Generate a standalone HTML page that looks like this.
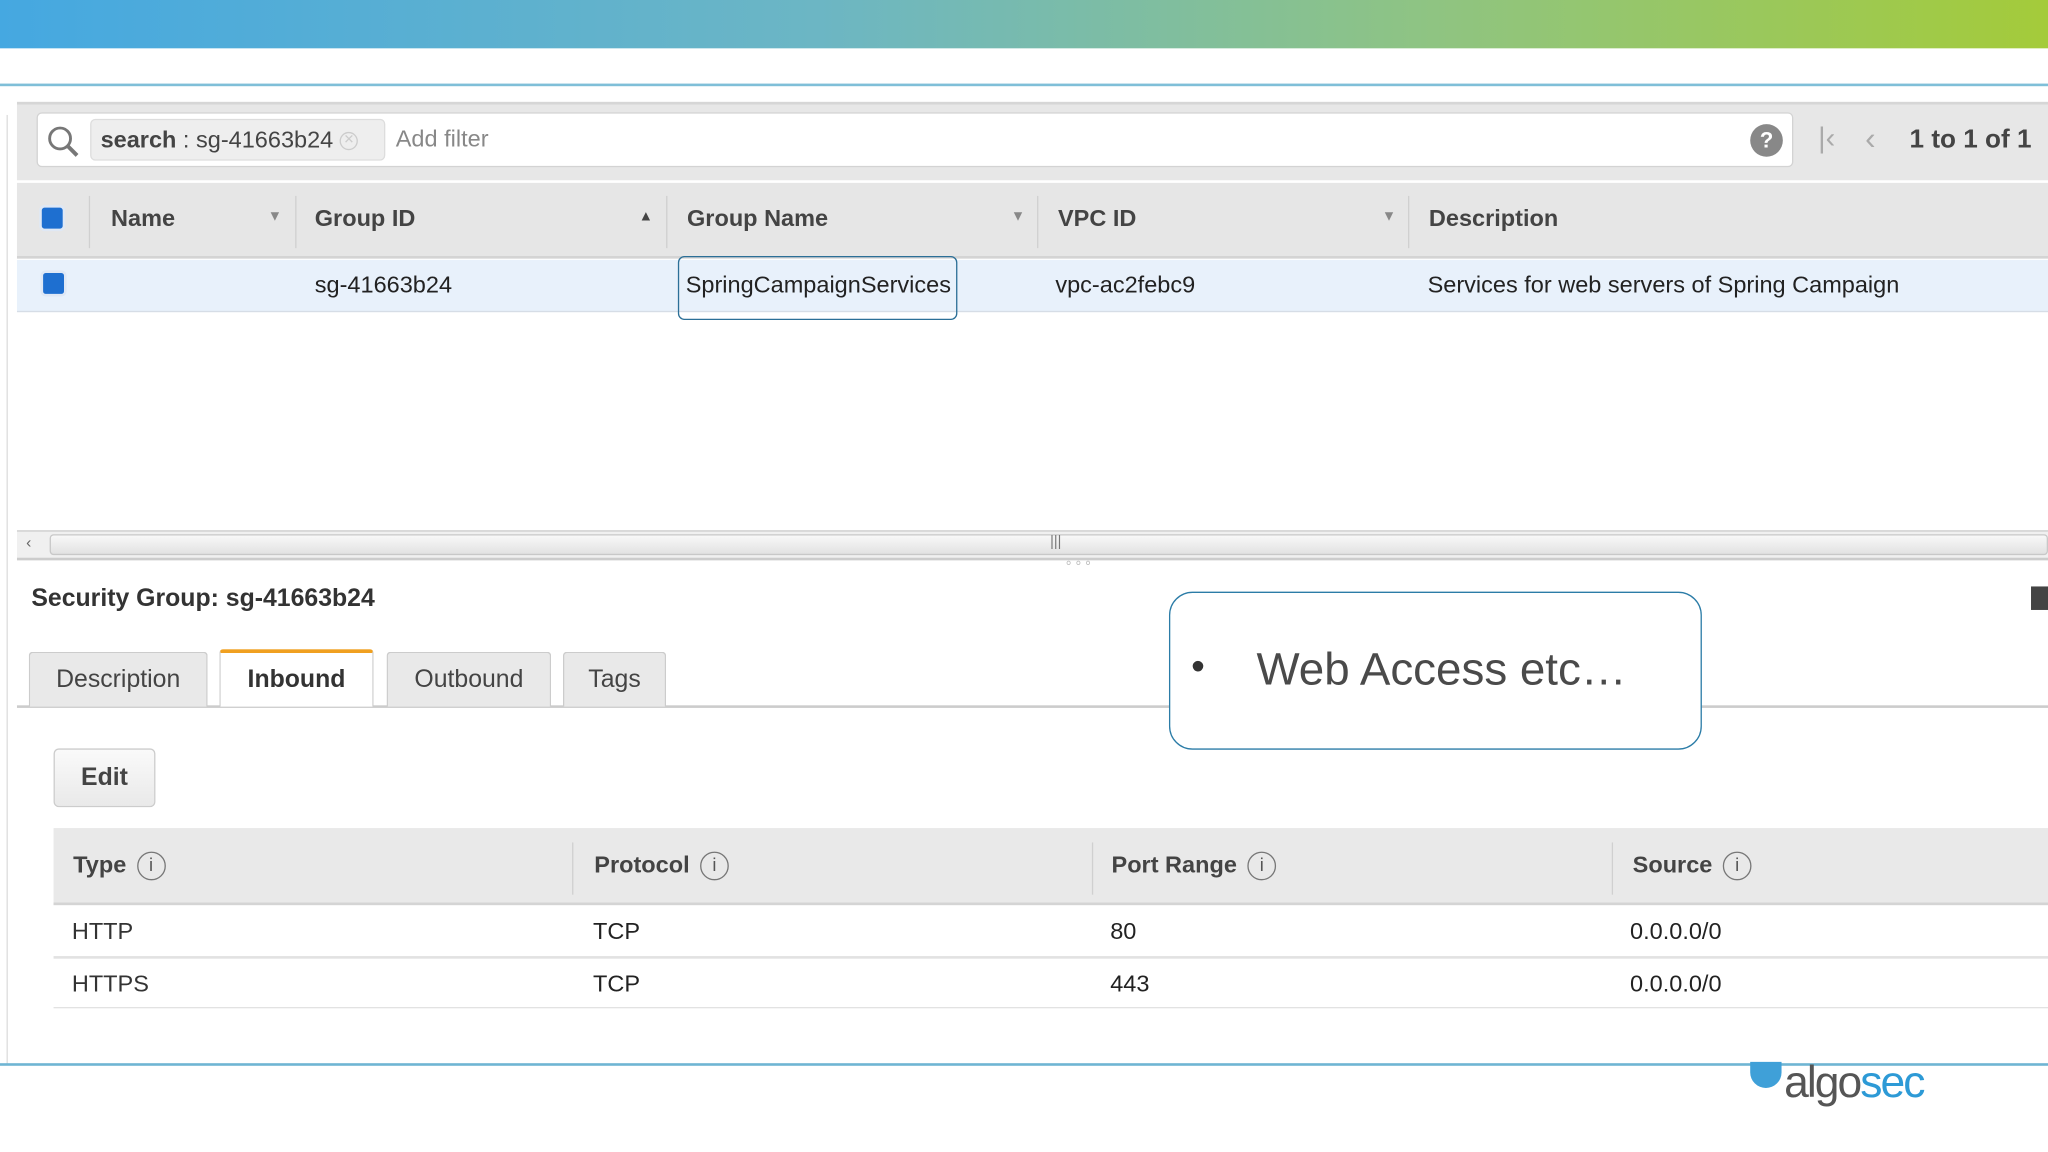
<!DOCTYPE html>
<html><head><meta charset="utf-8"><style>
*{box-sizing:border-box;margin:0;padding:0}
body{width:2048px;height:1152px;overflow:hidden;background:#fff;font-family:"Liberation Sans",Arial,sans-serif;color:#333}
#w{position:absolute;left:0;top:0;width:1568px;height:882px;transform:scale(1.30612);transform-origin:0 0}
.a{position:absolute}
.hd{font-weight:bold;font-size:18px;color:#444}
.tx{font-size:18px;color:#222}
.sep{position:absolute;width:1px;background:#d0d0d0}
.cb{position:absolute;width:20px;height:20px;border-radius:4px;background:#1e6fd0;border:2px solid #dfe8f5}
.tab{position:absolute;top:499px;height:42px;border:1px solid #ccc;border-bottom:none;background:#e9e9e9;font-size:19px;color:#444;text-align:center;line-height:42px;border-radius:3px 3px 0 0}
.ic{display:inline-block;width:22px;height:22px;border:1.5px solid #777;border-radius:50%;font-size:14px;line-height:19px;text-align:center;font-weight:normal;color:#555;margin-left:8px;vertical-align:middle}
</style></head><body><div id="w">
<div class="a" style="left:0;top:0;width:1568px;height:37px;background:linear-gradient(90deg,#45a8e1,#6cb6c4 40%,#8fc482 70%,#a4cb3a)"></div>
<div class="a" style="left:0;top:64px;width:1568px;height:2px;background:#7fbfd8"></div>
<div class="a" style="left:5px;top:88px;width:1px;height:727px;background:#ddd"></div>
<div class="a" style="left:13px;top:78px;width:1555px;height:60px;background:#e7e7e7;border-top:2px solid #d6d6d6"></div>
<div class="a" style="left:28px;top:86px;width:1345px;height:42px;background:#fff;border:1px solid #d3d3d3;border-radius:4px"></div>
<svg class="a" style="left:34px;top:94px" width="28" height="28"><circle cx="12" cy="12" r="8" fill="none" stroke="#777" stroke-width="2.2"/><line x1="18" y1="18" x2="25" y2="25" stroke="#777" stroke-width="3"/></svg>
<div class="a" style="left:69px;top:91px;width:226px;height:32px;background:#eee;border:1px solid #ddd;border-radius:4px;font-size:18px;line-height:30px;padding-left:7px;color:#444"><b>search</b> : sg-41663b24 <span style="display:inline-block;width:14px;height:14px;border-radius:50%;border:1px solid #ccc;font-size:10px;line-height:12px;text-align:center;color:#ccc;vertical-align:middle">✕</span></div>
<div class="a" style="left:303px;top:96px;font-size:18px;color:#888">Add filter</div>
<div class="a" style="left:1340px;top:95px;width:25px;height:25px;border-radius:50%;background:#888;color:#fff;font-weight:bold;text-align:center;line-height:25px;font-size:17px">?</div>
<div class="a" style="left:1392px;top:93px;font-size:22px;color:#aaa">|&lsaquo;</div>
<div class="a" style="left:1428px;top:93px;font-size:24px;color:#aaa">&lsaquo;</div>
<div class="a" style="left:1462px;top:96px;font-size:20px;font-weight:bold;color:#444">1 to 1 of 1</div>
<div class="a" style="left:13px;top:140px;width:1555px;height:58px;background:#e6e6e6;border-bottom:2px solid #d4d4d4"></div>
<div class="cb" style="left:30px;top:157px"></div>
<div class="sep" style="left:68px;top:150px;height:40px"></div>
<div class="sep" style="left:226px;top:150px;height:40px"></div>
<div class="sep" style="left:510px;top:150px;height:40px"></div>
<div class="sep" style="left:794px;top:150px;height:40px"></div>
<div class="sep" style="left:1078px;top:150px;height:40px"></div>
<div class="a hd" style="left:85px;top:157px">Name</div><div class="a" style="left:205px;top:160px;font-size:11px;color:#888">▼</div>
<div class="a hd" style="left:241px;top:157px">Group ID</div><div class="a" style="left:489px;top:160px;font-size:11px;color:#444">▲</div>
<div class="a hd" style="left:526px;top:157px">Group Name</div><div class="a" style="left:774px;top:160px;font-size:11px;color:#888">▼</div>
<div class="a hd" style="left:810px;top:157px">VPC ID</div><div class="a" style="left:1058px;top:160px;font-size:11px;color:#888">▼</div>
<div class="a hd" style="left:1094px;top:157px">Description</div>
<div class="a" style="left:13px;top:199px;width:1555px;height:40px;background:#e8f1fb;border-bottom:1px solid #d6dde6"></div>
<div class="cb" style="left:31px;top:207px"></div>
<div class="a tx" style="left:241px;top:208px">sg-41663b24</div>
<div class="a" style="left:519px;top:196px;width:214px;height:49px;border:1.5px solid #2b6f97;border-radius:5px"></div>
<div class="a tx" style="left:525px;top:208px">SpringCampaignServices</div>
<div class="a tx" style="left:808px;top:208px">vpc-ac2febc9</div>
<div class="a tx" style="left:1093px;top:208px">Services for web servers of Spring Campaign</div>
<div class="a" style="left:13px;top:406px;width:1555px;height:23px;background:#f0f0f0;border-top:1px solid #ccc;border-bottom:2px solid #ccc"></div>
<div class="a" style="left:38px;top:409px;width:1530px;height:16px;background:linear-gradient(#f8f8f8,#e2e2e2);border:1px solid #c8c8c8;border-radius:3px"></div>
<div class="a" style="left:20px;top:408px;font-size:12px;color:#666">&lsaquo;</div>
<div class="a" style="left:804px;top:409px;font-size:11px;color:#777">|||</div>
<div class="a" style="left:816px;top:428px;font-size:11px;color:#bbb;letter-spacing:3px">°°°</div>
<div class="a" style="left:24px;top:448px;font-size:19px;font-weight:bold;color:#333">Security Group: sg-41663b24</div>
<div class="a" style="left:1555px;top:449px;width:13px;height:18px;background:#444"></div>
<div class="a" style="left:13px;top:540px;width:1555px;height:2px;background:#ccc"></div>
<div class="tab" style="left:22px;width:137px">Description</div>
<div class="tab" style="left:168px;width:118px;background:#fff;border-top:3px solid #f0a020;font-weight:bold;color:#333;height:44px;top:497px">Inbound</div>
<div class="tab" style="left:296px;width:126px">Outbound</div>
<div class="tab" style="left:431px;width:79px">Tags</div>
<div class="a" style="left:895px;top:453px;width:408px;height:121px;border:1.5px solid #2b7ca7;border-radius:18px;background:#fff"></div>
<div class="a" style="left:912px;top:494px;font-size:30px;color:#333">•</div>
<div class="a" style="left:962px;top:493px;font-size:35px;color:#4a4a4a">Web Access etc…</div>
<div class="a" style="left:41px;top:573px;width:78px;height:45px;border:1px solid #ccc;border-radius:4px;background:linear-gradient(#fafafa,#e9e9e9);text-align:center;line-height:44px;font-size:19px;font-weight:bold;color:#444">Edit</div>
<div class="a" style="left:41px;top:634px;width:1527px;height:59px;background:#e9e9e9;border-bottom:2px solid #d4d4d4"></div>
<div class="sep" style="left:438px;top:645px;height:40px"></div>
<div class="sep" style="left:836px;top:645px;height:40px"></div>
<div class="sep" style="left:1234px;top:645px;height:40px"></div>
<div class="a hd" style="left:56px;top:652px">Type<span class="ic">i</span></div>
<div class="a hd" style="left:455px;top:652px">Protocol<span class="ic">i</span></div>
<div class="a hd" style="left:851px;top:652px">Port Range<span class="ic">i</span></div>
<div class="a hd" style="left:1250px;top:652px">Source<span class="ic">i</span></div>
<div class="a" style="left:41px;top:732px;width:1527px;height:2px;background:#e2e2e2"></div>
<div class="a" style="left:41px;top:771px;width:1527px;height:1px;background:#e2e2e2"></div>
<div class="a tx" style="left:55px;top:703px;color:#333">HTTP</div><div class="a tx" style="left:454px;top:703px">TCP</div><div class="a tx" style="left:850px;top:703px">80</div><div class="a tx" style="left:1248px;top:703px">0.0.0.0/0</div>
<div class="a tx" style="left:55px;top:743px;color:#333">HTTPS</div><div class="a tx" style="left:454px;top:743px">TCP</div><div class="a tx" style="left:850px;top:743px">443</div><div class="a tx" style="left:1248px;top:743px">0.0.0.0/0</div>
<div class="a" style="left:0;top:814px;width:1568px;height:2px;background:#6fb5d3"></div>
<div class="a" style="left:1340px;top:813px;width:24px;height:20px;background:#3fa0d8;border-radius:0 0 12px 12px"></div>
<div class="a" style="left:1366px;top:810px;font-size:34px;color:#555;letter-spacing:-1.5px">algo<span style="color:#2d9ad6">sec</span></div>
</div></body></html>
